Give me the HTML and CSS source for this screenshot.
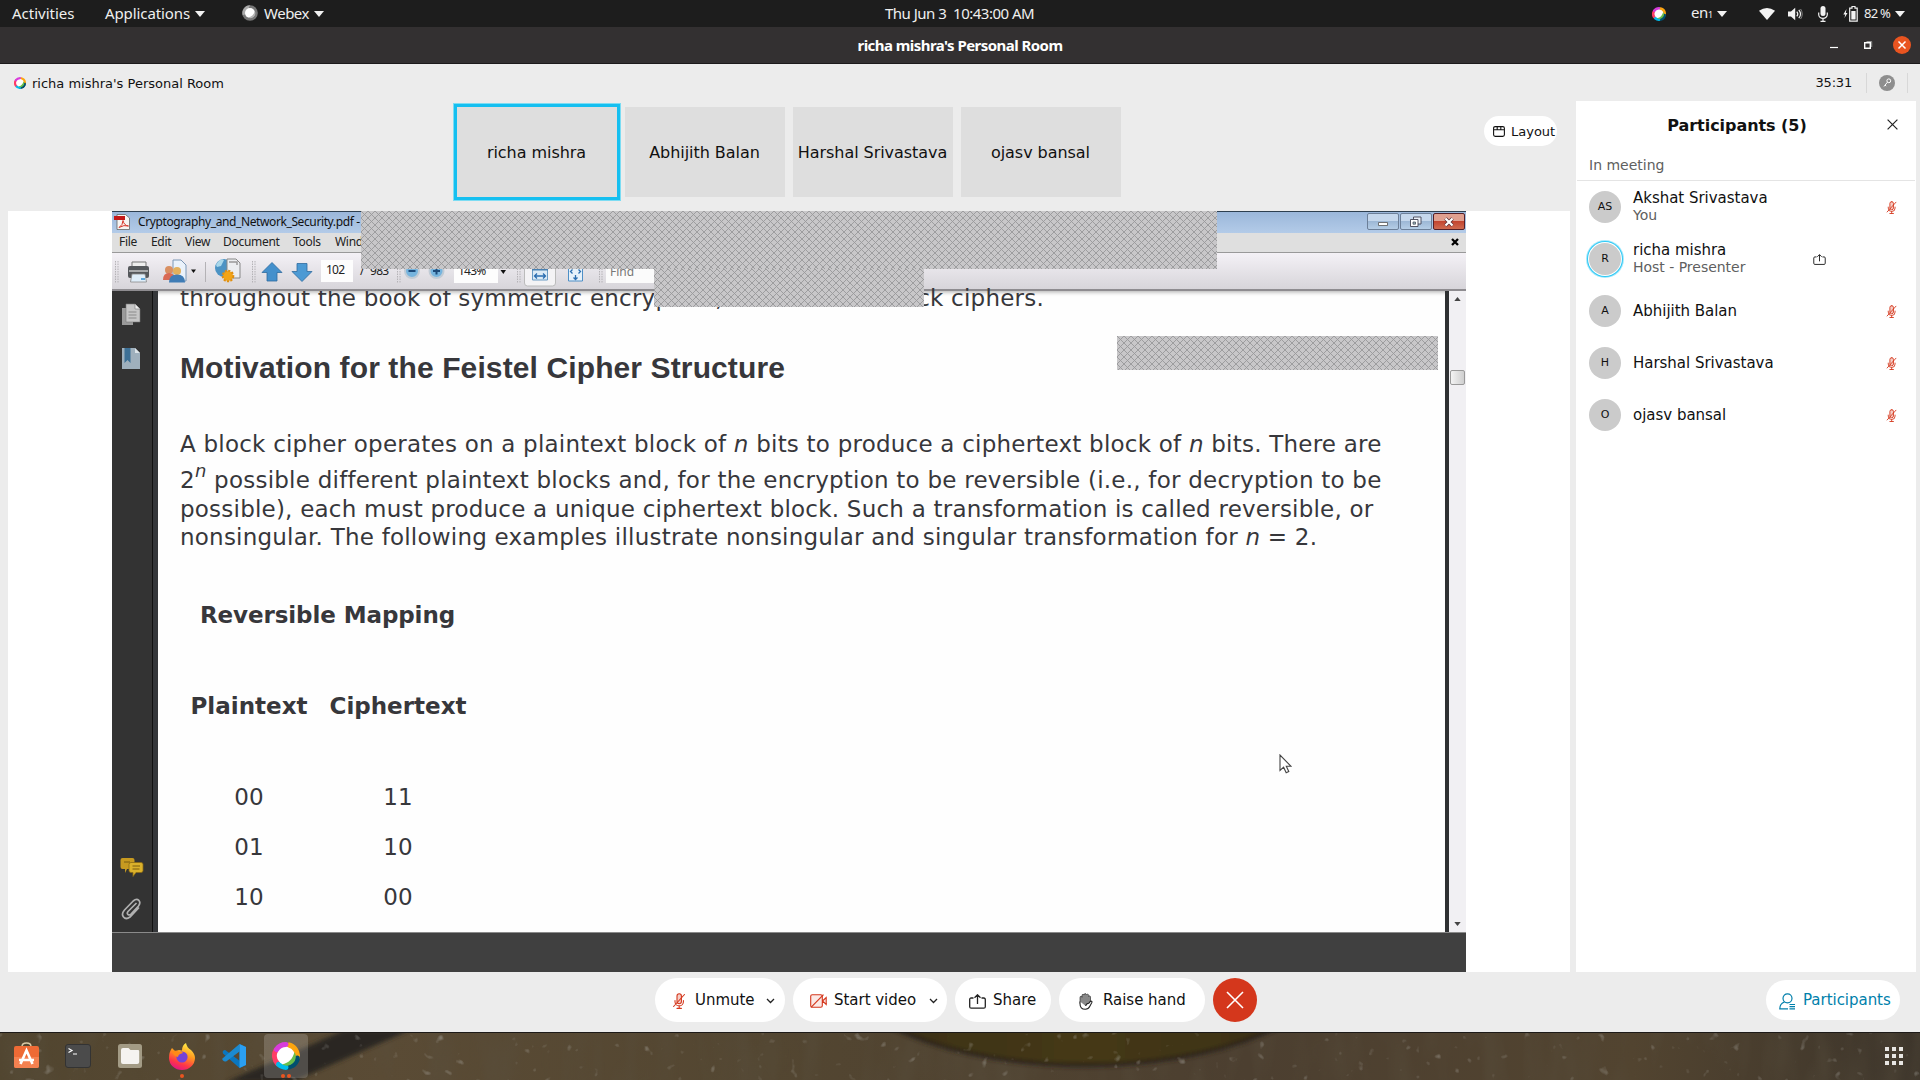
FILE: index.html
```html
<!DOCTYPE html>
<html lang="en">
<head>
<meta charset="utf-8">
<title>richa mishra's Personal Room</title>
<link rel="stylesheet" href="styles.css">
</head>
<body>
<svg width="0" height="0" class="defs" aria-hidden="true">
  <defs>
    <pattern id="hatch" width="7" height="7" patternUnits="userSpaceOnUse">
      <rect width="7" height="7" fill="#c8c7c9"/>
      <path d="M-1-1l9 9M8-1l-9 9" stroke="#98989b" stroke-width=".9"/>
    </pattern>
  </defs>
  <symbol id="webex" viewBox="0 0 28 28">
    <circle cx="14" cy="14" r="10" fill="#fff"/>
    <g fill="none" stroke-width="5" stroke-linecap="round">
      <path d="M5.5 21.500A11.500 11.500 0 0 1 4 8" stroke="#ff3d67"/>
      <path d="M14 25.500A11.500 11.500 0 0 0 24.800 18" stroke="#00506f"/>
      <path d="M25.500 15A11.500 11.500 0 0 0 17 3" stroke="#fca50f"/>
      <path d="M4.500 7.500A11.500 11.500 0 0 1 14 2.600" stroke="#d83cdb"/>
      <path d="M6.500 22.500A11.500 11.500 0 0 0 14 25.400" stroke="#00bceb"/>
      <path d="M25.300 16A11.500 11.500 0 0 1 21.500 22.800" stroke="#00506f"/>
    </g>
    <path d="M22.500 10a9 9 0 0 1-12.500 12.300C17 21 20.500 17 22.500 10z" fill="#6abf4b"/>
  </symbol>
  <symbol id="mic-off" viewBox="0 0 12 16">
    <g fill="none" stroke="#d4371c" stroke-width="1.1" stroke-linecap="round">
      <rect x="4" y=".8" width="4.400" height="10" rx="2.200" fill="#f6cfc8"/>
      <path d="M2 7.500v1.200a4.200 4.200 0 0 0 8.400 0V7.500M6.200 13v2.300M4 15.400h4.400M11.500 1.500L.6 13.500"/>
    </g>
  </symbol>
  <symbol id="share" viewBox="0 0 17 15">
    <path d="M4.500 4H2.200Q.7 4 .7 5.500v7.200q0 1.500 1.500 1.500h12.600q1.500 0 1.500-1.500V5.500q0-1.500-1.500-1.500h-2.300M8.500 10V1M5.500 3.800L8.500.8l3 3" fill="none" stroke="#222" stroke-width="1.300"/>
  </symbol>
  <symbol id="chev" viewBox="0 0 9 6"><path d="M1 1l3.500 3.500L8 1" fill="none" stroke="#222" stroke-width="1.300"/></symbol>
</svg>

<header class="topbar">
  <span class="t-act">Activities</span>
  <span class="t-app">Applications</span><i class="tri tri-app"></i>
  <svg class="wx-gray" viewBox="0 0 16 16"><circle cx="8" cy="8" r="7.800" fill="#777"/><path d="M8 .2a7.800 7.800 0 0 0-7.300 10L4 9z" fill="#aaa"/><circle cx="8" cy="8" r="5" fill="#fff"/><path d="M12.800 6a5 5 0 0 1-7 6.500C9.500 12 12 9.500 12.800 6z" fill="#b5b5b5"/></svg>
  <span class="t-wx">Webex</span><i class="tri"></i>
  <span class="clock">Thu Jun 3&nbsp; 10:43:00 AM</span>
  <div class="tray">
    <svg class="tr-wx"><use href="#webex"/></svg>
    <span class="lang">en<small>1</small></span><i class="tri"></i>
    <svg class="wifi" viewBox="0 0 16 12"><path d="M0 2.800Q8-2.600 16 2.800L8 12z" fill="#f2f2f2"/></svg>
    <svg class="vol" viewBox="0 0 15 14"><path d="M0 4.500h3L7.200.8v12.400L3 9.500H0z" fill="#f2f2f2"/><path d="M8.800 4.600q2 2.400 0 4.800M10.800 2.800q3.400 4.200 0 8.400" fill="none" stroke="#f2f2f2" stroke-width="1.200"/><path d="M12.600 2q3.200 5 0 10" fill="none" stroke="#8a8a8a"/></svg>
    <svg class="mic" viewBox="0 0 10 16"><rect x="2.500" width="5" height="10" rx="2.500" fill="#f2f2f2"/><path d="M.7 6.500v2a4.300 3.800 0 0 0 8.600 0v-2M5 12.500V15M2.500 15.400h5" fill="none" stroke="#f2f2f2" stroke-width="1.200"/></svg>
    <svg class="bat" viewBox="0 0 16 16"><path d="M3.500 3L.3 8.500h1.900L1.500 12l3-5H2.800z" fill="#f2f2f2"/><path d="M9 .5h3v1.700h2.200v12.900H6.700V2.200H9z" fill="none" stroke="#f2f2f2" stroke-width="1.200"/><path d="M8.300 5h4.300v8.500H8.300z" fill="#f2f2f2"/></svg>
    <span class="pct">82 %</span><i class="tri"></i>
  </div>
</header>

<div class="titlebar">
  <span class="title">richa mishra's Personal Room</span>
  <div class="winbtns">
    <svg viewBox="0 0 90 18" width="90" height="18"><path d="M8 11.500h8" stroke="#fff" stroke-width="1.200"/><path d="M42.700 6.700h5.600v5.600h-5.600z" fill="none" stroke="#fff" stroke-width="1.400"/><path d="M44.500 5.500h5.200v5.500" fill="none" stroke="#999"/><circle cx="80" cy="9" r="9" fill="#e95420"/><path d="M76.500 5.500l7 7m0-7l-7 7" stroke="#fff" stroke-width="1.500"/></svg>
  </div>
</div>

<div class="app">
  <div class="meetbar">
    <svg class="mb-wx"><use href="#webex"/></svg>
    <span class="room">richa mishra's Personal Room</span>
    <span class="timer">35:31</span>
    <i class="sep"></i>
    <svg class="key" viewBox="0 0 16 16"><circle cx="8" cy="8" r="8" fill="#8e8e8e"/><circle cx="9.800" cy="5.800" r="1.900" fill="none" stroke="#fff"/><path d="M8.400 7.200L5 11.500m1-1.500l1.200 1" fill="none" stroke="#fff"/></svg>
    <i class="sep"></i>
  </div>

  <main class="body">
    <section class="left">
      <div class="strip">
        <div class="tile active">richa mishra</div>
        <div class="tile">Abhijith Balan</div>
        <div class="tile">Harshal Srivastava</div>
        <div class="tile">ojasv bansal</div>
        <button class="layout"><svg viewBox="0 0 12 11" width="12" height="11"><path d="M.6 2.200Q.6.600 2.200.6h7.600q1.600 0 1.600 1.600v6.600q0 1.600-1.600 1.600H2.200Q.6 10.400.6 8.800zM.6 3.700h10.800M4.200.6v3M7.800.6v3" fill="none" stroke="#111" stroke-width="1.100"/></svg>Layout</button>
      </div>
      <div class="stage">
        <div class="shared">
          <div class="p-title">
            <svg viewBox="0 0 16 16" width="16" height="16"><path d="M3 .5h8.500l4 3.500v11.500H3z" fill="#f7f5f3" stroke="#666" stroke-width=".8"/><path d="M0 2h11v4H0z" fill="#c31818"/><path d="M5 13.500Q9 11 9 6.500q1 5 5.500 5.500Q10 10.500 5 13.500z" fill="none" stroke="#d8362a"/></svg>
            <span class="p-name">Cryptography_and_Network_Security.pdf -</span>
            <div class="p-btns">
              <b><svg viewBox="0 0 30 16"><path d="M10.500 8.500h9v3h-9z" fill="#fff" stroke="#555" stroke-width=".8"/></svg></b>
              <b><svg viewBox="0 0 30 16"><path d="M12.500 3h7.500v7h-7.500z" fill="#e9f0f8" stroke="#445" stroke-width=".9"/><path d="M9.500 5.500H17v7H9.500z" fill="#fff" stroke="#445" stroke-width=".9"/><path d="M12 8h2.500v2.200H12z" fill="#9bb" stroke="#445" stroke-width=".7"/></svg></b>
              <b class="x"><svg viewBox="0 0 30 16"><path d="M11.500 4.500l7 7m0-7l-7 7" stroke="#5a3038" stroke-width="3.600"/><path d="M11.500 4.500l7 7m0-7l-7 7" stroke="#fff" stroke-width="2.200"/></svg></b>
            </div>
          </div>
          <div class="p-menu">
            <span class="m1">File</span><span class="m2">Edit</span><span class="m3">View</span><span class="m4">Document</span><span class="m5">Tools</span><span class="m6">Window</span>
            <svg class="m-x" viewBox="0 0 8 8"><path d="M1 1l6 6m0-6L1 7" stroke="#000" stroke-width="2.300"/></svg>
          </div>
          <div class="p-tools">
            <svg class="ico-l" viewBox="0 0 205 36">
              <path d="M3.500 7v22M6 7v22M140.500 7v22M143 7v22" stroke="#b4b2b6" stroke-dasharray="1.500 1"/>
              <path d="M93.500 8v20" stroke="#b4b2b6"/>
              <path d="M20 8h14v6H20z" fill="#eee" stroke="#777"/><rect x="16" y="12" width="21" height="12" rx="2" fill="#55585c"/><path d="M17 17h19" stroke="#a9abad" stroke-width="2"/><path d="M20 20h13l1.500 8H18.500z" fill="#dfeefa" stroke="#888" stroke-width=".8"/><path d="M29 25h4" stroke="#5da8dc" stroke-width="2"/>
              <path d="M61 6h8l5 5v16H61z" fill="#eaf2fb" stroke="#7b97b5"/><circle cx="57" cy="16" r="4" fill="#d98f62"/><path d="M51 26q0-7 6-7t6 7z" fill="#d96a55"/><circle cx="65" cy="17" r="4" fill="#e2b05c"/><path d="M57 28.500q0-8 8-8t8 8z" fill="#3f7cb5"/>
              <path d="M79 15.500h5l-2.500 3.500z" fill="#111"/>
              <circle cx="112" cy="14" r="9" fill="#4c93c4"/><path d="M104 11q4-7 8-5l-3 6-4 1z" fill="#a9d7ea"/><path d="M115 5h9l4 4v15h-13z" fill="#eceef1" stroke="#888"/><path d="M117 8h8v3" fill="none" stroke="#999" stroke-width="1.500"/><circle cx="116" cy="22" r="5" fill="#f2a416"/><circle cx="116" cy="22" r="5.300" fill="none" stroke="#e08f10" stroke-dasharray="2.200 1.300" stroke-width="2"/>
              <path d="M160 8.500l10 10h-5v8.500h-10v-8.500h-5z" fill="#4490cc" stroke="#2f6b9e" stroke-width=".8"/>
              <path d="M190 27.500l-10-10h5V9.500h10v8h5z" fill="#4c9ad4" stroke="#2f6b9e" stroke-width=".8"/>
            </svg>
            <span class="f-page">102</span>
            <span class="f-of">/ 983</span>
            <svg class="ico-m" viewBox="0 0 60 36">
              <path d="M4.500 7v22M7 7v22" stroke="#b4b2b6" stroke-dasharray="1.500 1"/>
              <circle cx="19" cy="17" r="7" fill="#76b4de" stroke="#c0cbd5" stroke-width="2"/><path d="M15.500 17h7" stroke="#1c4a7a" stroke-width="2"/>
              <circle cx="43.500" cy="17" r="7" fill="#76b4de" stroke="#c0cbd5" stroke-width="2"/><path d="M40 17h7M43.500 13.500v7" stroke="#1c4a7a" stroke-width="2"/>
            </svg>
            <span class="f-zoom">143%</span>
            <svg class="ico-r" viewBox="0 0 108 36">
              <path d="M2.500 16h5.500l-2.700 4z" fill="#111"/><path d="M19.500 7v22M22 7v22M101.500 7v22M104 7v22" stroke="#b4b2b6" stroke-dasharray="1.500 1"/>
              <rect x="26.500" y="4" width="31" height="28" rx="3" fill="#f4f3f5" stroke="#bbb"/>
              <path d="M34.500 8h15v18h-15z" fill="#dcebf6" stroke="#6b9cc4"/><path d="M34 15.500h16" stroke="#4a80b0" stroke-width="2"/><path d="M36.500 22h11m-8.500-2.500L36.500 22l2.500 2.500m6-5l2.500 2.500-2.500 2.500" stroke="#2a6db0" fill="none" stroke-width="1.300"/>
              <path d="M70.500 8h14v19h-14z" fill="#e6f1fa" stroke="#4e8fc6"/><path d="M74.500 15.500l-2 2 2 2m6-4l2 2-2 2M77.500 21v4.500m-2-2l2 2 2-2" stroke="#2a6db0" fill="none" stroke-width="1.300"/>
            </svg>
            <span class="f-find">Find</span>
          </div>
          <div class="p-main">
            <aside class="p-side">
              <svg class="s1" viewBox="0 0 20 23"><path d="M1 5h11v17H1z" fill="#9a9a9a"/><path d="M5 1h9l5 5v13H5z" fill="#c6c6c6" stroke="#777" stroke-width=".6"/><path d="M14 1v5h5" fill="#eee" stroke="#777" stroke-width=".6"/><path d="M7.500 9h8M7.500 12h8M7.500 15h8" stroke="#8a8a8a"/></svg>
              <svg class="s2" viewBox="0 0 20 23"><path d="M1 1h13l5 5v16H1z" fill="#9fb0bd"/><path d="M14 1v5h5" fill="#dde5ea"/><path d="M3.500 1h6v15l-3-3-3 3z" fill="#3d7096"/></svg>
              <svg class="s3" viewBox="0 0 24 19"><path d="M2.500 0h10q2 0 2 2v7q0 2-2 2H7l-2 4V11H2.500Q.5 11 .5 9V2q0-2 2-2z" fill="#c79a20"/><path d="M11 4.500h10q2 0 2 2v6q0 2-2 2h-5l-3 4v-4h-2q-2 0-2-2v-6q0-2 2-2z" fill="#dbb12b" stroke="#8a6a14" stroke-width=".8"/><path d="M4 4h6M12.500 8h7.500M12.500 11h7" stroke="#7a5c10"/></svg>
              <svg class="s4" viewBox="0 0 20 22"><path d="M15.500 5L7 13.500q-1.500 2 0 3t3-.5l7.500-8q2.500-3.500.3-5.700t-5.600.7L3.500 12q-3.500 4-1 7t6.500 0l9-9.500" fill="none" stroke="#b0b0b0" stroke-width="1.700"/></svg>
            </aside>
            <article class="page">
              <p class="l0"><span>throughout the book of symmetric encryption,</span><span class="tail">ck ciphers.</span></p>
              <h2>Motivation for the Feistel Cipher Structure</h2>
              <p class="l1">A block cipher operates on a plaintext block of <em>n</em> bits to produce a ciphertext block of <em>n</em> bits. There are</p>
              <p class="l2">2<sup>n</sup> possible different plaintext blocks and, for the encryption to be reversible (i.e., for decryption to be</p>
              <p class="l3">possible), each must produce a unique ciphertext block. Such a transformation is called reversible, or</p>
              <p class="l4">nonsingular. The following examples illustrate nonsingular and singular transformation for <em>n</em> = 2.</p>
              <h3>Reversible Mapping</h3>
              <div class="map">
                <b>Plaintext</b><b>Ciphertext</b>
                <span>00</span><span>11</span>
                <span>01</span><span>10</span>
                <span>10</span><span>00</span>
              </div>
            </article>
            <div class="p-scroll">
              <svg viewBox="0 0 8 5" width="7" height="4"><path d="M4 0l4 5H0z" fill="#444"/></svg>
              <i></i>
              <svg viewBox="0 0 8 5" width="7" height="4"><path d="M4 5l4-5H0z" fill="#444"/></svg>
            </div>
          </div>
          <svg class="hatch h-a"><rect width="100%" height="100%" fill="url(#hatch)"/></svg>
          <svg class="hatch h-b"><rect width="100%" height="100%" fill="url(#hatch)"/></svg>
          <svg class="hatch h-c"><rect width="100%" height="100%" fill="url(#hatch)"/></svg>
          <svg class="cursor" viewBox="0 0 13 20"><path d="M1 1v15.500l3.600-3.300 2.600 5.600 2.600-1.300-2.500-5.200H12z" fill="#fff" stroke="#444" stroke-width="1.100"/></svg>
        </div>
      </div>
    </section>

    <aside class="panel">
      <div class="ph"><b>Participants (5)</b><svg viewBox="0 0 11 11" width="11" height="11"><path d="M.6.6l9.800 9.800m0-9.800L.6 10.400" stroke="#222" stroke-width="1.200"/></svg></div>
      <div class="sec">In meeting</div>
      <ul>
        <li><i class="av">AS</i><div><span>Akshat Srivastava</span><small>You</small></div><svg class="mo"><use href="#mic-off"/></svg></li>
        <li><i class="av host">R</i><div><span>richa mishra</span><small>Host - Presenter</small></div><svg class="sh"><use href="#share"/></svg></li>
        <li><i class="av">A</i><div><span>Abhijith Balan</span></div><svg class="mo"><use href="#mic-off"/></svg></li>
        <li><i class="av">H</i><div><span>Harshal Srivastava</span></div><svg class="mo"><use href="#mic-off"/></svg></li>
        <li><i class="av">O</i><div><span>ojasv bansal</span></div><svg class="mo"><use href="#mic-off"/></svg></li>
      </ul>
    </aside>
  </main>

  <footer class="controls">
    <button class="c1"><svg width="12" height="16"><use href="#mic-off"/></svg><span>Unmute</span><svg class="ch" width="9" height="6"><use href="#chev"/></svg></button>
    <button class="c2"><svg width="17" height="14" viewBox="0 0 17 14"><path d="M2.200.7h8.600q1.500 0 1.500 1.500v9.600q0 1.500-1.500 1.500H2.200Q.7 13.300.7 11.800V2.200Q.7.700 2.200.7zM12.500 7l3.700-3.500v7z" fill="#fbe9e6" stroke="#d4371c" stroke-width="1.100"/><path d="M13.500.7L1 13.300" stroke="#d4371c" stroke-width="1.200"/></svg><span>Start video</span><svg class="ch" width="9" height="6"><use href="#chev"/></svg></button>
    <button class="c3"><svg width="17" height="15"><use href="#share"/></svg><span>Share</span></button>
    <button class="c4"><svg width="14" height="17" viewBox="0 0 14 17"><path d="M1 9V4.500Q1 3.300 2 3.300t1 1V2.500q0-1.200 1-1.200t1.100.7Q5.200.6 6.200.6t1.200 1.300q.3-.7 1.200-.7t1 1.300v1q.2-.6 1-.6t.9 1.200V10L7 15H4Q1 13.500 1 9z" fill="#888" stroke="#333" stroke-width=".7"/><path d="M1 8.500v2.200Q1 16.200 6.300 16.200q3.200 0 4.400-2.600l2.200-4.200q.2-1.300-.9-1.300-.7 0-2.200 2.200Q7 10.500 6.700 13" fill="#fff" stroke="#222" stroke-width="1.100"/></svg><span>Raise hand</span></button>
    <button class="end"><svg width="18" height="18" viewBox="0 0 18 18"><path d="M1 1l16 16m0-16L1 17" stroke="#fff" stroke-width="1.600"/></svg></button>
    <button class="c6"><svg width="17" height="17" viewBox="0 0 17 17"><circle cx="8.500" cy="5.300" r="4.500" fill="none" stroke="#007fab" stroke-width="1.200"/><path d="M5.500 9Q.8 10.500.8 15.800H9M10.500 11.500H16M10.500 13.700H16M10.500 15.900H16" fill="none" stroke="#007fab" stroke-width="1.200"/></svg><span>Participants</span></button>
  </footer>
</div>

<nav class="dock">
  <svg class="wall" viewBox="0 0 1920 48" preserveAspectRatio="none">
    <defs>
      <linearGradient id="wd" x1="0" x2="1" y2="0"><stop offset="0" stop-color="#51452f"/><stop offset=".2" stop-color="#5a4b35"/><stop offset=".4" stop-color="#534631"/><stop offset=".65" stop-color="#4c3f30"/><stop offset=".85" stop-color="#524430"/><stop offset="1" stop-color="#3d352b"/></linearGradient>
      <linearGradient id="bowl" x1="0" x2="1" y2="0"><stop offset="0" stop-color="#3a3019"/><stop offset=".5" stop-color="#453818"/><stop offset="1" stop-color="#3a3019"/></linearGradient>
      <filter id="soft"><feGaussianBlur stdDeviation="2"/></filter>
      <filter id="dots" x="0" y="0" width="1" height="1"><feTurbulence type="fractalNoise" baseFrequency=".09" numOctaves="2" seed="4"/><feColorMatrix values="0 0 0 0 .46  0 0 0 0 .45  0 0 0 0 .42  4 0 0 0 -2.800"/></filter>
      <filter id="grain" x="0" y="0" width="1" height="1"><feTurbulence type="fractalNoise" baseFrequency=".04 .01" numOctaves="2" seed="8"/><feColorMatrix values="0 0 0 0 .1  0 0 0 0 .08  0 0 0 0 .05  1.200 0 0 0 -.5"/></filter>
    </defs>
    <rect width="1920" height="48" fill="url(#wd)"/>
    <rect width="1920" height="48" filter="url(#grain)" opacity=".8"/>
    <path d="M226 50L345-2h65L292 50z" fill="#292724" filter="url(#soft)"/>
    <ellipse cx="1085" cy="-72" rx="250" ry="105" fill="url(#bowl)" stroke="#2a241a" stroke-width="4" filter="url(#soft)"/>
    <rect width="1920" height="48" filter="url(#dots)" opacity=".6"/>
    <path d="M0 .5h1920" stroke="#1d1a18"/>
  </svg>
  <svg class="d1" viewBox="0 0 25 26"><path d="M8 6V4.500q0-3.500 4.500-3.500T17 4.500V6" fill="none" stroke="#d9c9a5" stroke-width="1.500"/><rect y="4" width="25" height="22" rx="2" fill="#ee6a35"/><path d="M0 15h25v9q0 2-2 2H2q-2 0-2-2z" fill="#f48150"/><path d="M6.500 22L12.500 8.500l6 13.500M5 18h15" fill="none" stroke="#fff" stroke-width="2.600"/></svg>
  <svg class="d2" viewBox="0 0 26 24"><rect x=".5" y=".5" width="25" height="23" rx="2.500" fill="#4b4b4b" stroke="#333"/><path d="M3.500 4.500l3.500 2-3.500 2M8 10h4" fill="none" stroke="#fff" stroke-width="1.200"/></svg>
  <svg class="d3" viewBox="0 0 24 24"><rect width="24" height="24" rx="2.500" fill="#a39b85"/><path d="M5 4h5.500l2 2H20q1.200 0 1.200 1.200V18q0 2-2 2H5q-2 0-2-2V6q0-2 2-2z" fill="#f5f3f0"/></svg>
  <div class="run"><svg viewBox="0 0 26 28" width="26" height="28"><defs><linearGradient id="ff" x1=".7" y1="0" x2=".3" y2="1"><stop offset="0" stop-color="#fff14a"/><stop offset=".4" stop-color="#ff9a1f"/><stop offset=".75" stop-color="#ff3647"/><stop offset="1" stop-color="#e0138a"/></linearGradient></defs><path d="M3 6l3 3 4-1q1 0 3 .5Q13 3 17 1q1 5 5 7 4 4 4 8a13 12 0 0 1-26 0Q0 10 3 6z" fill="url(#ff)"/><circle cx="13" cy="15" r="5.600" fill="#7542d6"/><path d="M3 9q5-1 7 1 3-1 4 1-5 1-5 4-5-1-6-6z" fill="#ff8a17"/></svg><i></i></div>
  <svg class="d5" viewBox="0 0 24 24"><path d="M17.500 0L24 3v18l-6.500 3L1 9.500Q0 7.500 1.500 6.500t3 .5l13 9.800z" fill="#0a76bf"/><path d="M17.500 0v7.500L4.500 17.200q-2 1-3.500-.7t0-2.500z" fill="#1b8ad0"/><path d="M17.500 0L24 3v18l-6.500 3z" fill="#2b9ff2"/></svg>
  <div class="run on"><svg width="28" height="28"><use href="#webex"/></svg><i></i><i></i></div>
  <svg class="grid9" viewBox="0 0 18 18"><g fill="#e8e6e3"><path d="M0 0h4v4H0zM7 0h4v4H7zM14 0h4v4h-4zM0 7h4v4H0zM7 7h4v4H7zM14 7h4v4h-4zM0 14h4v4H0zM7 14h4v4H7zM14 14h4v4h-4z"/></g></svg>
</nav>
</body>
</html>
```
FILE: styles.css
```css
* { box-sizing: border-box; }
body { margin: 0; width: 1920px; height: 1080px; overflow: hidden; background: #ececec; color: #111; font-family: "DejaVu Sans", sans-serif; display: flex; flex-direction: column; }
svg { display: block; flex: none; }
.defs { position: absolute; }
button { border: 0; background: #fff; font: inherit; color: inherit; padding: 0; display: flex; align-items: center; }
span, b { white-space: nowrap; }

/* desktop top bar */
.topbar { position: relative; height: 27px; background: #1d1d1d; color: #efefef; font: 15px/27px "Noto Sans", sans-serif; display: flex; align-items: center; padding: 0 15px 0 12px; flex: none; }
.tri { width: 0; height: 0; border: 5px solid transparent; border-top: 6px solid #f2f2f2; border-bottom: 0; margin-left: 5px; flex: none; }
.t-act { width: 93px; }
.t-app { width: 85px; letter-spacing: -.1px; }
.wx-gray { width: 16px; height: 16px; margin: 0 6px 2px 37px; }
.t-wx { width: 45px; letter-spacing: -.49px; }
.clock { position: absolute; left: 885px; top: 0; line-height: 26px; letter-spacing: -.51px; }
.tray { margin-left: auto; display: flex; align-items: center; }
.tr-wx { width: 14px; height: 14px; margin-right: 25px; }
.lang { width: 21px; letter-spacing: -.4px; }
.lang small { font-size: 9px; }
.wifi { width: 16px; height: 12px; margin-left: 32px; }
.vol { width: 15px; height: 14px; margin-left: 13px; }
.mic { width: 10px; height: 16px; margin-left: 15px; }
.bat { width: 16px; height: 16px; margin-left: 15px; }
.pct { width: 26px; margin-left: 5px; font-size: 13px; letter-spacing: -.76px; }

.titlebar { position: relative; height: 37px; background: #333031; border-bottom: 1px solid #1c1a1b; color: #fff; font: bold 15px/37px "Noto Sans", sans-serif; letter-spacing: -.55px; display: flex; justify-content: center; flex: none; }
.winbtns { position: absolute; right: 8px; top: 9px; }

/* meeting window */
.app { height: 968px; display: flex; flex-direction: column; flex: none; }
.meetbar { height: 37px; display: flex; align-items: center; padding: 0 12px 0 14px; font-size: 13px; flex: none; }
.mb-wx { width: 12px; height: 12px; margin-right: 6px; }
.room { padding-top: 1px; }
.timer { margin-left: auto; margin-right: 14px; letter-spacing: -.2px; }
.sep { width: 1px; height: 20px; background: #d8d8d8; }
.key { width: 16px; height: 16px; margin: 0 12px; }
.body { height: 871px; display: flex; flex: none; }
.left { width: 1570px; padding-left: 8px; display: flex; flex-direction: column; }
.strip { height: 110px; padding: 6px 13px 0 449px; display: flex; gap: 8px; flex: none; }
.tile { width: 160px; height: 90px; background: #dedede; display: flex; align-items: center; justify-content: center; font-size: 16px; letter-spacing: -.05px; padding-right: 1px; flex: none; }
.active { box-shadow: 0 0 0 3px #15bff0, 0 0 0 4px #7cdcf3; }
.layout { margin: 9px 0 0 auto; width: 73px; height: 30px; border-radius: 15px; font-size: 13px; padding-left: 9px; gap: 6px; }
.stage { height: 761px; background: #fff; padding-left: 104px; }

/* shared PDF reader */
.shared { position: relative; width: 1354px; height: 761px; background: #404040; font-family: "Noto Sans", sans-serif; overflow: hidden; }
.p-title { height: 22px; border-top: 1px solid #2d3f50; background: linear-gradient(#9bb7da, #b3cbe8); display: flex; align-items: center; padding: 0 1px 2px 2px; font-size: 12px; color: #111; }
.p-name { margin-left: 8px; letter-spacing: -.39px; }
.p-btns { margin-left: auto; display: flex; gap: 1px; }
.p-btns b { width: 32px; height: 17px; border: 1px solid #6c7f98; border-radius: 2px; background: linear-gradient(#c5d7ec 50%, #9db8d6 50%, #b5cde6); }
.p-btns .x { background: linear-gradient(#e0a090 45%, #c34530 50%, #cf6a50); border-color: #542028; }
.p-menu { height: 20px; background: #dfdfdf; border-bottom: 1px solid #999; font-size: 12px; line-height: 17px; letter-spacing: -.3px; display: flex; align-items: center; padding: 0 7px 2px 7px; color: #222; }
.p-menu span { flex: none; }
.m1 { width: 32px; } .m2 { width: 34px; } .m3 { width: 38px; } .m4 { width: 70px; } .m5 { width: 42px; }
.m-x { width: 8px; height: 8px; margin-left: auto; }
.p-tools { height: 38px; background: linear-gradient(#f4f1f6, #d7d5da); border-bottom: 2px solid #8e8c90; display: flex; align-items: center; font-size: 12px; letter-spacing: -.75px; color: #222; }
.ico-l { width: 205px; height: 36px; }
.p-tools svg { position: relative; top: 1px; }
.f-page { width: 32px; height: 22px; margin-left: 4px; padding-left: 5px; background: #fdfdfd; line-height: 20px; }
.f-of { margin-left: 7px; width: 31px; line-height: 22px; word-spacing: 4px; }
.ico-m { width: 60px; height: 36px; margin-left: 2px; }
.f-zoom { width: 44px; height: 24px; margin-left: 1px; padding-left: 4px; background: #fdfdfd; line-height: 24px; }
.ico-r { width: 108px; height: 36px; }
.f-find { width: 60px; height: 24px; padding-left: 4px; background: #fbfbfb; color: #777; line-height: 25px; letter-spacing: 0; }
.p-main { height: 642px; display: flex; border-bottom: 1px solid #8a8a8a; }
.p-side { width: 46px; background: #333; border-right: 5px solid #35373a; box-shadow: inset -1px 0 #111; display: flex; flex-direction: column; padding-left: 9px; flex: none; }
.s1 { width: 20px; height: 23px; margin-top: 12px; }
.s2 { width: 20px; height: 23px; margin-top: 21px; }
.s3 { width: 24px; height: 19px; margin: auto 0 0 -1px; }
.s4 { width: 20px; height: 22px; margin: 21px 0 12px 0; }
.page { width: 1287px; background: #fefefe; box-shadow: inset 0 5px 4px -4px #aaa; padding-left: 22px; color: #37373b; font: 23px/28px "DejaVu Sans", sans-serif; overflow: hidden; flex: none; }
.page p, .page h3 { margin: 0; font-size: 23px; height: 28px; white-space: nowrap; }
.page p { letter-spacing: .22px; }
.page .l0 { margin-top: -7px; display: flex; }
.l0 .tail { position: absolute; right: 422px; }
.page h2 { margin: 38px 0 0; font: bold 30px/36px "Liberation Sans", sans-serif; height: 36px; letter-spacing: .115px; white-space: nowrap; }
.page .l1 { margin-top: 44px; }
.page .l2 { margin-top: 8px; letter-spacing: .235px; }
.page .l3, .page .l4 { margin-top: .5px; }
.page sup { font-size: 18px; font-style: italic; line-height: 0; position: relative; top: -2px; }
.page h3 { margin: 50px 0 0 20px; letter-spacing: -.1px; }
.map { display: grid; grid-template-columns: 138px 160px; grid-template-rows: 91px 50px 50px 50px; margin-top: 63px; justify-items: center; }
.p-scroll { width: 21px; border-left: 4px solid #2e3032; background: #f1f0f3; display: flex; flex-direction: column; align-items: center; padding: 6px 0; flex: none; }
.p-scroll i { width: 15px; height: 15px; margin-top: 69px; margin-bottom: auto; border: 1px solid #999; border-radius: 2px; background: linear-gradient(90deg, #f3f3f3, #cfcfcf); }
.hatch { position: absolute; }
.h-a { left: 249px; top: 0; width: 856px; height: 58px; }
.h-b { left: 542px; top: 58px; width: 270px; height: 38px; }
.h-c { left: 1005px; top: 125px; width: 321px; height: 34px; }
.cursor { position: absolute; left: 1167px; top: 543px; width: 13px; height: 20px; }

/* participants */
.panel { margin-left: 6px; width: 340px; background: #fff; }
.ph { position: relative; height: 48px; display: flex; align-items: center; justify-content: center; padding-right: 18px; font-size: 16px; letter-spacing: -.05px; }
.ph svg { position: absolute; right: 18px; top: 18px; }
.sec { height: 32px; border-bottom: 1px solid #e4e4e4; margin: 0 1px; padding-left: 12px; font-size: 14px; line-height: 32px; color: #606060; }
.panel ul { list-style: none; margin: 0; padding: 0; }
.panel li { height: 52px; display: flex; align-items: center; padding: 0 19px 0 13px; font-size: 15px; letter-spacing: -.02px; }
.av { width: 32px; height: 32px; border-radius: 50%; background: #cbcbcb; font: 11px/31px "DejaVu Sans", sans-serif; text-align: center; margin-right: 12px; flex: none; }
.host { box-shadow: 0 0 0 1px #fff, 0 0 0 2px #2fc9f5, 0 0 0 3px #a8e9fb; }
.panel li div { display: flex; flex-direction: column; line-height: 18px; }
.panel small { font-size: 14px; color: #606060; line-height: 17px; margin-bottom: 2px; }
.mo { width: 11px; height: 13px; margin-left: auto; }
.sh { width: 13px; height: 11px; margin-left: auto; margin-right: 71px; }

/* call controls */
.controls { position: relative; height: 60px; display: flex; gap: 8px; padding: 6px 0 0 655px; font-size: 15px; letter-spacing: -.03px; flex: none; }
.controls button { height: 44px; border-radius: 22px; padding-left: 18px; letter-spacing: -.03px; flex: none; }
.controls svg { position: relative; top: 1px; }
.controls .end svg { top: 0; }
.ch { margin-left: auto; }
.c1 { width: 130px; gap: 10px; padding-right: 10px; }
.c2 { width: 154px; gap: 7px; padding-right: 9px; }
.controls .c2 { padding-left: 17px; }
.controls .c3 { width: 96px; padding-left: 14px; gap: 7px; }
.controls .c4 { width: 146px; padding-left: 20px; gap: 10px; }
.controls .end { width: 44px; background: #d4371c; padding: 0; justify-content: center; }
.controls .c6 { width: 134px; height: 40px; margin: 2px 20px 0 auto; padding-left: 13px; gap: 7px; color: #007fab; }

/* dock */
.dock { position: relative; height: 48px; display: flex; align-items: center; padding: 0 17px 0 14px; flex: none; }
.wall { position: absolute; inset: 0; width: 1920px; height: 48px; }
.dock > :not(.wall) { position: relative; }
.d1 { width: 25px; height: 26px; top: -1px; }
.d2 { width: 26px; height: 24px; margin-left: 26px; }
.d3 { width: 24px; height: 24px; margin-left: 27px; }
.run { width: 44px; height: 44px; margin-left: 18px; border-radius: 4px; display: flex; align-items: flex-end; justify-content: center; gap: 2px; }
.run svg { position: absolute; top: 8px; }
.run i { width: 4px; height: 4px; border-radius: 50%; background: #e95420; }
.d5 { width: 24px; height: 24px; margin-left: 18px; }
.on { background: rgba(255, 255, 255, .18); }
.grid9 { width: 18px; height: 18px; margin-left: auto; }
```
